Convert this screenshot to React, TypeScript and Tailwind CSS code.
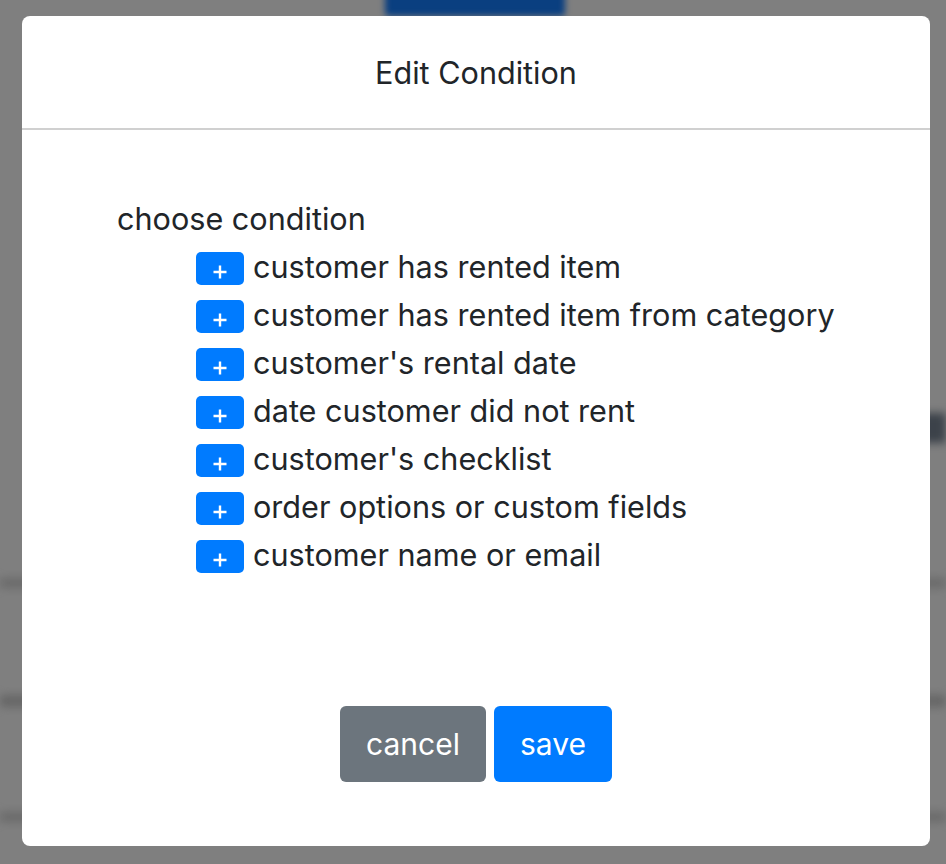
import React from "react";

const items = [
  "customer has rented item",
  "customer has rented item from category",
  "customer's rental date",
  "date customer did not rent",
  "customer's checklist",
  "order options or custom fields",
  "customer name or email",
];

function Plus() {
  return (
    <svg width="14" height="14" viewBox="0 0 14 14" className="mt-[7px]">
      <path d="M7 0.5V13.5M0.5 7H13.5" stroke="white" strokeWidth="2.4" />
    </svg>
  );
}

export default function App() {
  return (
    <div
      className="relative w-[946px] h-[864px] overflow-hidden bg-[#7f7f7f] text-[#212529]"
      style={{ fontFamily: "Inter, 'Noto Sans', sans-serif" }}
    >
      {/* blurred background content under the overlay */}
      <div className="absolute left-[385px] top-[-20px] w-[180px] h-[36px] rounded bg-[#0a3f80] blur-[3px]" />
      <div className="absolute right-0 top-[413px] w-[40px] h-[30px] bg-[#3c424a] blur-[4px]" />
      <div className="absolute left-0 right-0 top-[578px] h-[10px] bg-[#6a6a6a] blur-[4px]" />
      <div className="absolute left-0 right-0 top-[695px] h-[12px] bg-[#666666] blur-[4px]" />
      <div className="absolute left-0 right-0 top-[812px] h-[10px] bg-[#6a6a6a] blur-[4px]" />

      <div className="relative mt-[16px] ml-[22px] w-[908px] h-[830px] rounded-[8px] bg-white flex flex-col">
        <div className="h-[114px] pt-[2px] flex items-center justify-center border-b-2 border-[#d0d0d0]">
          <h1 className="text-[30.6px] leading-none">Edit Condition</h1>
        </div>
        <div className="pt-[65px] pl-[95px]">
          <div className="text-[30.6px] leading-[48px] h-[48px]">choose condition</div>
          <div className="pl-[79px] flex flex-col">
            {items.map((t) => (
              <div key={t} className="flex items-center h-[48px]">
                <span className="w-[48px] h-[33px] mt-[3px] rounded-[5px] bg-[#007bff] flex items-center justify-center">
                  <Plus />
                </span>
                <span className="ml-[9px] text-[30.6px] leading-[48px]">{t}</span>
              </div>
            ))}
          </div>
        </div>
        <div className="mt-auto mb-[64px] flex justify-center gap-[8px]">
          <button className="w-[146px] h-[76px] rounded-[6px] bg-[#6c757d] text-white text-[30px]">cancel</button>
          <button className="w-[118px] h-[76px] rounded-[6px] bg-[#007bff] text-white text-[30px]">save</button>
        </div>
      </div>
    </div>
  );
}
